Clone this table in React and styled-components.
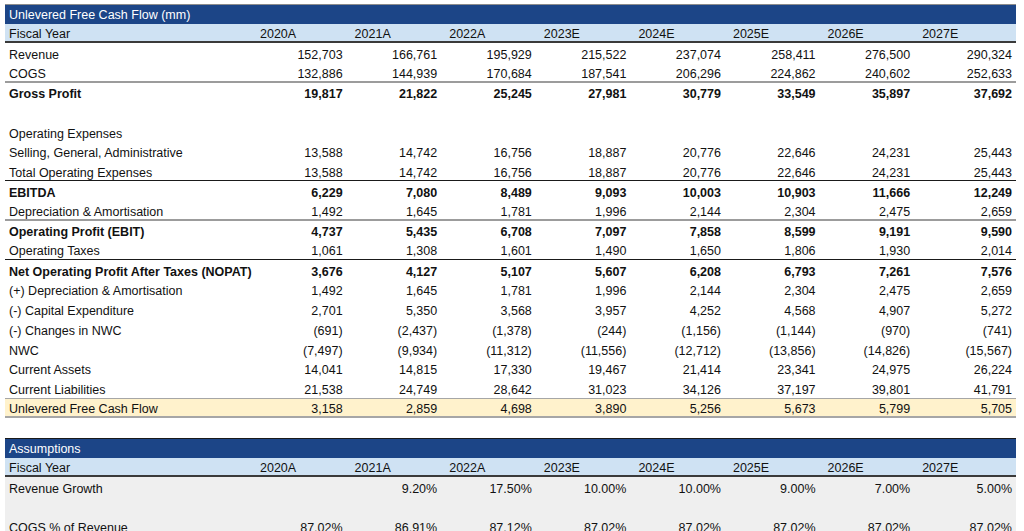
import styled, { createGlobalStyle, css } from "styled-components";

const GlobalStyle = createGlobalStyle`
    html, body {
        margin: 0;
        padding: 0;
        overflow: hidden;
        background: #ffffff;
    }
    body {
        font-family: "Liberation Sans", Arial, sans-serif;
        font-size: 12.5px;
        color: #111;
    }
`;

const YEARS = ["2020A", "2021A", "2022A", "2023E", "2024E", "2025E", "2026E", "2027E"];

const cashFlow = [
    { label: "Revenue", values: ["152,703", "166,761", "195,929", "215,522", "237,074", "258,411", "276,500", "290,324"] },
    { label: "COGS", values: ["132,886", "144,939", "170,684", "187,541", "206,296", "224,862", "240,602", "252,633"], line: "grey" },
    { label: "Gross Profit", bold: true, values: ["19,817", "21,822", "25,245", "27,981", "30,779", "33,549", "35,897", "37,692"] },
    { label: "", values: [] },
    { label: "Operating Expenses", values: [] },
    { label: "Selling, General, Administrative", values: ["13,588", "14,742", "16,756", "18,887", "20,776", "22,646", "24,231", "25,443"] },
    { label: "Total Operating Expenses", values: ["13,588", "14,742", "16,756", "18,887", "20,776", "22,646", "24,231", "25,443"], line: "black" },
    { label: "EBITDA", bold: true, values: ["6,229", "7,080", "8,489", "9,093", "10,003", "10,903", "11,666", "12,249"] },
    { label: "Depreciation & Amortisation", values: ["1,492", "1,645", "1,781", "1,996", "2,144", "2,304", "2,475", "2,659"], line: "grey" },
    { label: "Operating Profit (EBIT)", bold: true, values: ["4,737", "5,435", "6,708", "7,097", "7,858", "8,599", "9,191", "9,590"] },
    { label: "Operating Taxes", values: ["1,061", "1,308", "1,601", "1,490", "1,650", "1,806", "1,930", "2,014"], line: "black" },
    { label: "Net Operating Profit After Taxes (NOPAT)", bold: true, values: ["3,676", "4,127", "5,107", "5,607", "6,208", "6,793", "7,261", "7,576"] },
    { label: "(+) Depreciation & Amortisation", values: ["1,492", "1,645", "1,781", "1,996", "2,144", "2,304", "2,475", "2,659"] },
    { label: "(-) Capital Expenditure", values: ["2,701", "5,350", "3,568", "3,957", "4,252", "4,568", "4,907", "5,272"] },
    { label: "(-) Changes in NWC", values: ["(691)", "(2,437)", "(1,378)", "(244)", "(1,156)", "(1,144)", "(970)", "(741)"] },
    { label: "NWC", values: ["(7,497)", "(9,934)", "(11,312)", "(11,556)", "(12,712)", "(13,856)", "(14,826)", "(15,567)"] },
    { label: "Current Assets", values: ["14,041", "14,815", "17,330", "19,467", "21,414", "23,341", "24,975", "26,224"] },
    { label: "Current Liabilities", values: ["21,538", "24,749", "28,642", "31,023", "34,126", "37,197", "39,801", "41,791"] },
    { label: "Unlevered Free Cash Flow", tone: "yellow", values: ["3,158", "2,859", "4,698", "3,890", "5,256", "5,673", "5,799", "5,705"] },
];

const assumptions = [
    { label: "Revenue Growth", values: ["", "9.20%", "17.50%", "10.00%", "10.00%", "9.00%", "7.00%", "5.00%"] },
    { label: "", values: [] },
    { label: "COGS % of Revenue", values: ["87.02%", "86.91%", "87.12%", "87.02%", "87.02%", "87.02%", "87.02%", "87.02%"] },
];

const ROW_H = "19.72px";

const Sheet = styled.div`
    display: flex;
    flex-direction: column;
    width: 1011px;
    margin: 4px 0 0 5px;
`;

const Section = styled.section`
    display: flex;
    flex-direction: column;
`;

const TitleBar = styled.div`
    display: flex;
    align-items: center;
    box-sizing: border-box;
    height: ${ROW_H};
    padding: 2px 0 0 4px;
    background-color: #1c4587;
    color: #ffffff;
    border-top: 1px solid ${props => props.$dark ? "#1a1a1a" : "#8c8c8c"};
`;

const Grid = styled.div`
    display: grid;
    grid-template-columns: 247px repeat(7, 94.6px) 1fr;
    align-items: center;
    box-sizing: border-box;
    height: ${ROW_H};
    padding-top: 3px;
`;

const HeaderRow = styled(Grid)`
    background-color: #cfe2f3;
    border-bottom: 2px solid #3a3a3a;
`;

const Row = styled(Grid)`
    background-color: ${props => props.$tone === "yellow" ? "#fff2cc" : props.$tone === "grey" ? "#efefef" : "transparent"};
    font-weight: ${props => props.$bold ? 700 : 400};

    ${props => props.$line === "grey" && css`
        border-bottom: 2px solid #9c9c9c;
    `}

    ${props => props.$line === "black" && css`
        border-bottom: 1px solid #1a1a1a;
    `}

    ${props => props.$tone === "yellow" && css`
        border-top: 1px solid #a6a6a6;
        border-bottom: 2px solid #a6a6a6;
    `}
`;

const Label = styled.span`
    padding-left: 4px;
    white-space: nowrap;
`;

const Cell = styled.span`
    padding-right: 4px;
    text-align: right;
    white-space: nowrap;
`;

const HeadCell = styled.span`
    padding-left: 8px;
    white-space: nowrap;
`;

const Spacer = styled.div`
    height: ${ROW_H};
`;

const Header = () => (
    <HeaderRow>
        <Label>Fiscal Year</Label>
        {YEARS.map(year => <HeadCell key={year}>{year}</HeadCell>)}
    </HeaderRow>
);

const DataRow = ({ row, tone }) => (
    <Row $bold={row.bold} $line={row.line} $tone={row.tone || tone}>
        <Label>{row.label}</Label>
        {YEARS.map((year, i) => <Cell key={year}>{row.values[i] || ""}</Cell>)}
    </Row>
);

const App = () => {
    return (
        <>
            <GlobalStyle />
            <Sheet>
                <Section>
                    <TitleBar>Unlevered Free Cash Flow (mm)</TitleBar>
                    <Header />
                    {cashFlow.map((row, i) => <DataRow key={i} row={row} />)}
                </Section>

                <Spacer />

                <Section>
                    <TitleBar $dark>Assumptions</TitleBar>
                    <Header />
                    {assumptions.map((row, i) => <DataRow key={i} row={row} tone="grey" />)}
                </Section>
            </Sheet>
        </>
    );
};

export default App;
